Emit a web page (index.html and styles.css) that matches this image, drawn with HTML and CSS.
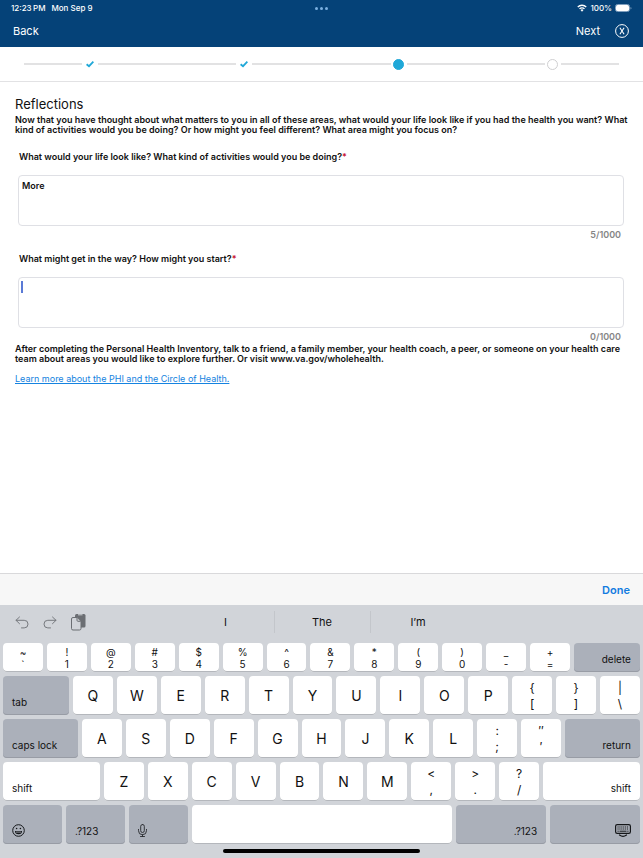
FILE: index.html
```html
<!DOCTYPE html>
<html lang="en">
<head>
    <meta charset="UTF-8">
    <meta name="viewport" content="width=device-width, initial-scale=1.0">
    <title>Reflections</title>
    <link rel="stylesheet" href="styles.css">
</head>
<body>
    <header class="header">
        <div class="status-bar">
            <div class="status-left"><span>12:23&#8201;PM</span><span>Mon Sep 9</span></div>
            <div class="dots"><i></i><i></i><i></i></div>
            <div class="status-right">
                <svg width="10" height="8" viewBox="0 0 20 16" fill="none" stroke="#fff" stroke-width="2.6"><path d="M1.5 6a12 12 0 0 1 17 0M5 9.8a7 7 0 0 1 10 0"/><path d="M10 15.5l-3-3.3a4.2 4.2 0 0 1 6 0z" fill="#fff" stroke="none"/></svg>
                <span>100%</span>
                <svg width="17" height="8" viewBox="0 0 17 8"><rect x=".5" y=".5" width="14" height="7" rx="2" fill="none" stroke="#7f9fbf"/><rect x="1" y="1" width="13" height="6" rx="1.5" fill="#fff"/><path d="M15.5 3v2.4q1-.3 1-1.2t-1-1.2" fill="#7f9fbf"/></svg>
            </div>
        </div>
        <nav class="nav-bar">
            <button class="nav-button">Back</button>
            <div class="nav-right">
                <button class="nav-button">Next</button>
                <button class="nav-button" aria-label="Close">
                    <svg width="14" height="14" viewBox="0 0 14 14" fill="none" stroke="#fff"><circle cx="7" cy="7" r="6.4"/><path d="M4.9 3.7l4.2 6.6M9.1 3.7l-4.2 6.6" stroke-width="1.1"/></svg>
                </button>
            </div>
        </nav>
    </header>

    <div class="stepper">
        <span class="line line-short"></span>
        <span class="step"><svg width="8" height="8" viewBox="0 0 8 8" fill="none" stroke="#20a8d8" stroke-width="1.8"><path d="M.6 4.2L3 6.2 7.4 1.6"/></svg></span>
        <span class="line"></span>
        <span class="step"><svg width="8" height="8" viewBox="0 0 8 8" fill="none" stroke="#20a8d8" stroke-width="1.8"><path d="M.6 4.2L3 6.2 7.4 1.6"/></svg></span>
        <span class="line"></span>
        <span class="step"><span class="circle active"></span></span>
        <span class="line"></span>
        <span class="step"><span class="circle"></span></span>
        <span class="line line-short"></span>
    </div>

    <main class="content">
        <h1>Reflections</h1>
        <p class="intro">Now that you have thought about what matters to you in all of these areas, what would your life look like if you had the health you want? What kind of activities would you be doing? Or how might you feel different? What area might you focus on?</p>

        <div class="field">
            <label for="life">What would your life look like? What kind of activities would you be doing?<span class="required">*</span></label>
            <div class="input-box"><textarea id="life">More</textarea></div>
            <div class="counter">5/1000</div>
        </div>

        <div class="field">
            <label for="start">What might get in the way? How might you start?<span class="required">*</span></label>
            <div class="input-box"><textarea id="start"></textarea><span class="caret"></span></div>
            <div class="counter">0/1000</div>
        </div>

        <p>After completing the Personal Health Inventory, talk to a friend, a family member, your health coach, a peer, or someone on your health care team about areas you would like to explore further. Or visit www.va.gov/wholehealth.</p>
        <a class="learn-more" href="#">Learn more about the PHI and the Circle of Health.</a>
    </main>

    <div class="done-bar"><button class="done">Done</button></div>

    <section class="keyboard">
        <div class="suggestions">
            <div class="tools">
                <button aria-label="Undo"><svg width="14" height="13" viewBox="0 0 14 13" fill="none" stroke="#76797e" stroke-linecap="round" stroke-linejoin="round"><path d="M4.5 1L1 4.3l3.5 3.4M1 4.3h8.2a3.7 3.7 0 0 1 0 7.6H6.5"/></svg></button>
                <button aria-label="Redo"><svg width="14" height="13" viewBox="0 0 14 13" fill="none" stroke="#76797e" stroke-linecap="round" stroke-linejoin="round"><path d="M9.5 1L13 4.3 9.5 7.7M13 4.3H4.8a3.7 3.7 0 0 0 0 7.6h2.7"/></svg></button>
                <button aria-label="Paste"><svg width="15" height="18" viewBox="0 0 15 18"><rect x="4" y="1" width="10.5" height="13.5" rx="1.5" fill="#6b6e73"/><path d="M7 1.8h4.5" stroke="#d1d4d9"/><path d="M2 4.5h4.3l3.7 3.8v7.2a1.5 1.5 0 0 1-1.5 1.5H2a1.5 1.5 0 0 1-1.5-1.5V6A1.5 1.5 0 0 1 2 4.5z" fill="#d1d4d9" stroke="#6b6e73"/><path d="M6 4.7v2.6q0 1 1 1h2.8" fill="none" stroke="#6b6e73"/></svg></button>
            </div>
            <div class="words">
                <button>I</button>
                <button>The</button>
                <button>I’m</button>
            </div>
        </div>

        <div class="keys">
            <div class="row row-numbers">
                <button class="key dual"><span>~</span><span>`</span></button>
                <button class="key dual"><span>!</span><span>1</span></button>
                <button class="key dual"><span>@</span><span>2</span></button>
                <button class="key dual"><span>#</span><span>3</span></button>
                <button class="key dual"><span>$</span><span>4</span></button>
                <button class="key dual"><span>%</span><span>5</span></button>
                <button class="key dual"><span>^</span><span>6</span></button>
                <button class="key dual"><span>&amp;</span><span>7</span></button>
                <button class="key dual"><span>*</span><span>8</span></button>
                <button class="key dual"><span>(</span><span>9</span></button>
                <button class="key dual"><span>)</span><span>0</span></button>
                <button class="key dual"><span>_</span><span>-</span></button>
                <button class="key dual"><span>+</span><span>=</span></button>
                <button class="key special right tab">delete</button>
            </div>
            <div class="row">
                <button class="key special tab">tab</button>
                <button class="key">Q</button>
                <button class="key">W</button>
                <button class="key">E</button>
                <button class="key">R</button>
                <button class="key">T</button>
                <button class="key">Y</button>
                <button class="key">U</button>
                <button class="key">I</button>
                <button class="key">O</button>
                <button class="key">P</button>
                <button class="key dual"><span>{</span><span>[</span></button>
                <button class="key dual"><span>}</span><span>]</span></button>
                <button class="key dual"><span>|</span><span>\</span></button>
            </div>
            <div class="row">
                <button class="key special caps">caps lock</button>
                <button class="key">A</button>
                <button class="key">S</button>
                <button class="key">D</button>
                <button class="key">F</button>
                <button class="key">G</button>
                <button class="key">H</button>
                <button class="key">J</button>
                <button class="key">K</button>
                <button class="key">L</button>
                <button class="key dual"><span>:</span><span>;</span></button>
                <button class="key dual"><span>″</span><span>′</span></button>
                <button class="key special right caps">return</button>
            </div>
            <div class="row">
                <button class="key special light shift">shift</button>
                <button class="key">Z</button>
                <button class="key">X</button>
                <button class="key">C</button>
                <button class="key">V</button>
                <button class="key">B</button>
                <button class="key">N</button>
                <button class="key">M</button>
                <button class="key dual"><span>&lt;</span><span>,</span></button>
                <button class="key dual"><span>&gt;</span><span>.</span></button>
                <button class="key dual"><span>?</span><span>/</span></button>
                <button class="key special light right shift">shift</button>
            </div>
            <div class="row">
                <button class="key special small" aria-label="Emoji"><svg width="13" height="13" viewBox="0 0 13 13" fill="none" stroke="#15171a"><circle cx="6.5" cy="6.5" r="5.8"/><path d="M3 7h7a3.5 3.3 0 0 1-7 0z" fill="#15171a" stroke="none"/><path d="M4 8.1h5" stroke="#abb0ba" stroke-width=".8"/><circle cx="4.6" cy="4.5" r=".8" fill="#15171a" stroke="none"/><circle cx="8.4" cy="4.5" r=".8" fill="#15171a" stroke="none"/></svg></button>
                <button class="key special small">.?123</button>
                <button class="key special small" aria-label="Dictate"><svg width="9" height="13" viewBox="0 0 9 13" fill="none" stroke="#26282c" stroke-width=".9" stroke-linecap="round"><rect x="2.7" y=".5" width="3.6" height="8" rx="1.8"/><path d="M.5 5.4v1.3a4 4 0 0 0 8 0V5.4M4.5 10.7v1.8M2.5 12.5h4"/></svg></button>
                <button class="key space" aria-label="Space"></button>
                <button class="key special right wide">.?123</button>
                <button class="key special right wide" aria-label="Hide keyboard"><svg width="16" height="13" viewBox="0 0 16 13" fill="none" stroke="#15171a"><rect x=".6" y=".6" width="14.8" height="8.8" rx="1.6" stroke-width="1.2"/><path d="M2.5 3h11M2.5 5h11" stroke-width="1.1" stroke-dasharray="1.1 .8"/><path d="M2.5 7.2h1.2M4.5 7.2h7M12.3 7.2h1.2"/><path d="M4.5 11Q8 13.6 11.5 11" stroke-width="1.2" stroke-linecap="round"/></svg></button>
            </div>
        </div>
        <div class="home-bar"></div>
    </section>
</body>
</html>
```
FILE: styles.css
```css
* {
    box-sizing: border-box;
}

body {
    margin: 0;
    min-height: 100vh;
    display: flex;
    flex-direction: column;
    font-family: Inter, "Liberation Sans", sans-serif;
    color: #111;
    background-color: #fff;
}

button {
    border: none;
    padding: 0;
    background: none;
    font-family: inherit;
    color: inherit;
    cursor: pointer;
}

svg {
    display: block;
}

/* Header */
.header {
    background-color: #054278;
    color: #fff;
}

.status-bar {
    display: grid;
    grid-template-columns: 1fr auto 1fr;
    align-items: center;
    height: 16px;
    padding: 0 11px;
    font-size: 8px;
    font-weight: 500;
}

.status-left {
    display: flex;
    gap: 6px;
}

.status-right {
    display: flex;
    justify-content: flex-end;
    align-items: center;
    gap: 3px;
}

.dots {
    display: flex;
    gap: 2px;
}

.dots i {
    width: 3px;
    height: 3px;
    border-radius: 50%;
    background-color: #7cb0e0;
}

.nav-bar {
    display: flex;
    justify-content: space-between;
    align-items: center;
    height: 31px;
    padding: 0 14px 2px 13px;
}

.nav-right {
    display: flex;
    align-items: center;
    gap: 15px;
}

.nav-button {
    font-size: 11px;
}

/* Progress */
.stepper {
    display: flex;
    align-items: center;
    height: 35px;
    padding: 0 24px;
    border-bottom: 1px solid #e2e2e4;
}

.line {
    flex: 138;
    height: 2px;
    background-color: #e2e2e3;
}

.line-short {
    flex: 58;
}

.step {
    width: 16px;
    display: flex;
    justify-content: center;
}

.circle {
    width: 11px;
    height: 11px;
    border: 1px solid #cfcfd1;
    border-radius: 50%;
}

.circle.active {
    border-color: #20a8d8;
    background-color: #20a8d8;
}

/* Form */
.content {
    flex: 1;
    padding: 14px 15px;
    font-size: 9px;
    font-weight: 600;
    line-height: 10px;
}

h1 {
    margin: 0 0 3px;
    font-size: 13px;
    font-weight: 400;
    line-height: 16px;
}

p {
    margin: 0;
}

.intro {
    margin-bottom: 3px;
}

.field {
    padding: 14px 4px 0 3px;
}

.field label {
    display: block;
    padding-left: 1px;
}

.required {
    color: #c8102e;
}

.input-box {
    position: relative;
    margin-top: 13px;
}

textarea {
    display: block;
    width: 100%;
    height: 51px;
    padding: 5px 3px;
    border: 1px solid #dfe0e5;
    border-radius: 4px;
    outline: none;
    resize: none;
    font: inherit;
    color: inherit;
}

.caret {
    position: absolute;
    top: 4px;
    left: 3px;
    width: 2px;
    height: 12px;
    background-color: #5a7ad6;
}

.counter {
    padding: 4px 3px 0 0;
    line-height: 10px;
    text-align: right;
    color: #858585;
}

.field + p {
    margin-top: 2px;
}

.learn-more {
    display: inline-block;
    margin-top: 10px;
    font-weight: 400;
    color: #1583e0;
}

/* Keyboard */
.done-bar {
    display: flex;
    justify-content: flex-end;
    height: 32px;
    padding: 0 13px;
    border-top: 1px solid #d9d9db;
    background-color: #f7f7f7;
}

.done {
    font-size: 11px;
    font-weight: 600;
    color: #127be0;
}

.keyboard {
    background-color: #d1d4d9;
}

.suggestions {
    display: grid;
    grid-template-columns: 1fr auto 1fr;
    align-items: center;
    height: 38px;
    padding: 0 15px;
}

.tools {
    display: flex;
    align-items: center;
    gap: 14px;
    padding-bottom: 4px;
}

.words {
    display: flex;
    padding-bottom: 4px;
}

.words button {
    width: 96px;
    height: 22px;
    font-size: 11px;
}

.words button + button {
    border-left: 1px solid #c3c6cb;
}

.keys {
    display: flex;
    flex-direction: column;
    gap: 4px;
    padding: 0 3px;
}

.row {
    display: flex;
    gap: 4px;
    height: 39px;
}

.row-numbers {
    height: 29px;
}

.key {
    flex: 1 1 40px;
    border-radius: 4px;
    background-color: #fff;
    box-shadow: inset 0 -1px 0 #b4b7bc;
    font-size: 14px;
    text-align: center;
}

.dual {
    display: flex;
    flex-direction: column;
    justify-content: center;
    align-items: center;
    font-size: 12px;
    line-height: 16px;
}

.row-numbers .dual {
    font-size: 10px;
    line-height: 12px;
}

.special {
    display: flex;
    align-items: flex-end;
    padding: 0 9px 7px;
    background-color: #abb0ba;
    box-shadow: inset 0 -1px 0 #989ca5;
    font-size: 10px;
}

.light {
    background-color: #fff;
    box-shadow: inset 0 -1px 0 #b4b7bc;
}

.right {
    justify-content: flex-end;
}

.tab {
    flex-basis: 66px;
}

.caps {
    flex-basis: 75px;
}

.shift {
    flex-basis: 97px;
}

.small {
    flex-basis: 59px;
}

.space {
    flex-basis: 261px;
}

.wide {
    flex-basis: 90px;
}

.home-bar {
    width: 197px;
    height: 4px;
    margin: 5px auto;
    border-radius: 2px;
    background-color: #000;
}
```
